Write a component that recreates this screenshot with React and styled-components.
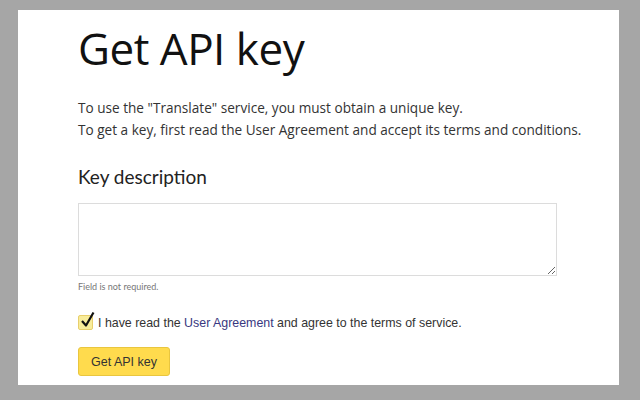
import React, { useState } from 'react'
import styled, { createGlobalStyle } from 'styled-components'

const GlobalStyle = createGlobalStyle`
  html, body {
    margin: 0;
    padding: 0;
    background: #a6a6a6;
  }
`

const Screen = styled.div`
  width: 640px;
  height: 400px;
  box-sizing: border-box;
  padding: 10px 21px 15px 18px;
  background: #a6a6a6;
`

const Panel = styled.div`
  height: 100%;
  box-sizing: border-box;
  background: #fff;
  padding: 10px 0 0 60px;
`

const Title = styled.h1`
  margin: 0;
  font-family: "Open Sans", sans-serif;
  font-weight: 400;
  font-size: 44px;
  line-height: 56px;
  letter-spacing: -0.5px;
  color: #111;
`

const Intro = styled.p`
  margin: 21px 0 0;
  font-family: "Open Sans", sans-serif;
  font-size: 13.6px;
  line-height: 22px;
  color: #333;
`

const SectionTitle = styled.h2`
  margin: 24px 0 0;
  font-family: Lato, sans-serif;
  font-weight: 400;
  font-size: 19px;
  line-height: 24px;
  color: #222;
`

const TextArea = styled.textarea`
  display: block;
  margin: 14px 0 0;
  width: 479px;
  height: 73px;
  box-sizing: border-box;
  border: 1px solid #dcdcdc;
  resize: vertical;
  outline: none;
`

const Hint = styled.div`
  margin-top: 5px;
  font-family: Lato, sans-serif;
  font-size: 9px;
  line-height: 12px;
  color: #777;
`

const AgreeRow = styled.label`
  display: flex;
  align-items: center;
  gap: 5px;
  margin-top: 22px;
  font-family: "Liberation Sans", Arial, sans-serif;
  font-size: 12.4px;
  color: #333;
`

const Box = styled.span`
  position: relative;
  width: 13px;
  height: 13px;
  border: 1px solid #e8cf6c;
  border-radius: 2px;
  background: #f8ec9a;
  flex: none;
`

const Tick = styled.svg`
  position: absolute;
  left: 1px;
  top: -5px;
`

const Link = styled.a`
  color: #383880;
  text-decoration: none;
`

const Button = styled.button`
  display: block;
  margin-top: 17px;
  width: 92px;
  height: 29px;
  border: 1px solid #e9c63f;
  border-radius: 3px;
  background: #ffdb4d;
  font-family: "Liberation Sans", Arial, sans-serif;
  font-size: 12.5px;
  color: #333;
  padding: 0;
`

export default function App() {
  const [agreed] = useState(true)

  return (
    <Screen>
      <GlobalStyle />
      <Panel>
        <Title>Get API key</Title>
        <Intro>
          To use the "Translate" service, you must obtain a unique key.
          <br />
          To get a key, first read the User Agreement and accept its terms and conditions.
        </Intro>
        <SectionTitle>Key description</SectionTitle>
        <TextArea />
        <Hint>Field is not required.</Hint>
        <AgreeRow>
          <Box>
            {agreed && (
              <Tick width="16" height="17" viewBox="0 0 16 17">
                <path d="M2 10 L6 14.5 L13.5 1.5" fill="none" stroke="#111" strokeWidth="2.2" strokeLinejoin="round" />
              </Tick>
            )}
          </Box>
          <span>
            I have read the <Link href="#">User Agreement</Link> and agree to the terms of service.
          </span>
        </AgreeRow>
        <Button>Get API key</Button>
      </Panel>
    </Screen>
  )
}
